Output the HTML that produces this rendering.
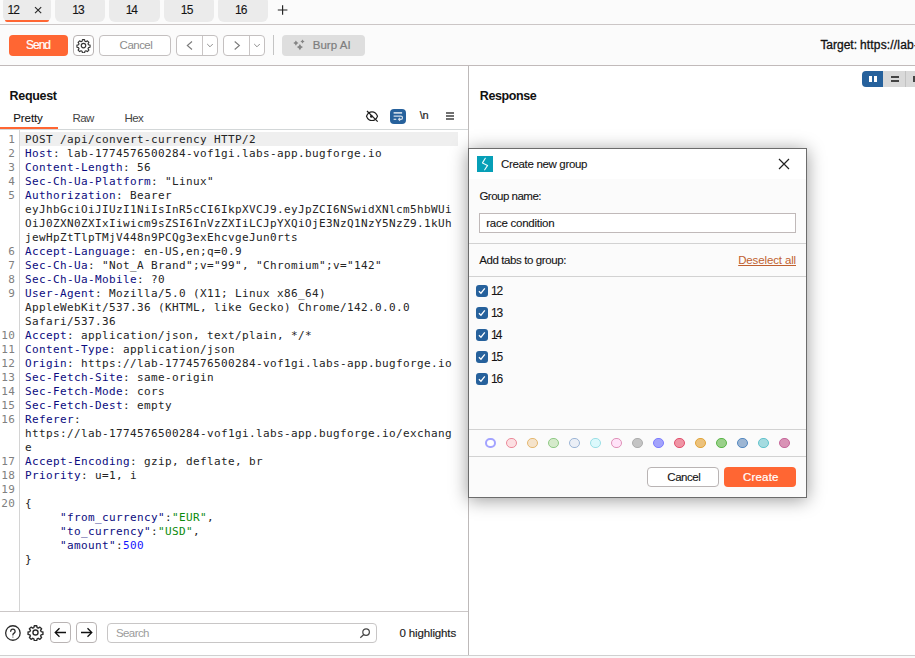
<!DOCTYPE html>
<html><head><meta charset="utf-8"><title>Burp Repeater</title>
<style>
*{box-sizing:border-box;margin:0;padding:0}
html,body{width:915px;height:658px;overflow:hidden;background:#fff}
body{position:relative;font-family:"Liberation Sans","DejaVu Sans",sans-serif;font-size:12px;color:#1a1a1a}
.abs{position:absolute}
.t{position:absolute;white-space:nowrap;line-height:16px}
/* top tabs */
#tabbar{left:0;top:0;width:915px;height:24px;background:#fbfbfb}
.tab{position:absolute;top:-4px;height:25.5px;background:#ebebeb;border-radius:6px}
#topline{left:0;top:24px;width:915px;height:1px;background:#cbc6c6}
#toolbar{left:0;top:25px;width:915px;height:40px;background:#fbfbfb}
#toolline{left:0;top:65px;width:915px;height:1px;background:#c1baba}
.btn{position:absolute;border:1px solid #b9b4b4;border-radius:4px;background:#fff}
/* editor */
#ed{left:0;top:133px;width:467px;font-family:"DejaVu Sans Mono","Liberation Mono",monospace;font-size:11px;letter-spacing:0.3774px;line-height:14px;color:#242424}
#ed div{height:14px;white-space:pre;position:relative}
#ed .n{position:absolute;left:0;width:15.300px;text-align:right;color:#808080}
#ed .c{position:absolute;left:25px}
#ed b{font-weight:normal;color:#0b0b80}
#ed i{font-style:normal;color:#0a8a0a}
#ed u{text-decoration:none;color:#1515ff}
</style></head><body>

<div id="tabbar" class="abs"></div>
<div class="tab" style="left:3px;width:48px"></div>
<div class="abs" style="left:5px;top:20px;width:44px;height:2px;background:#ff6633;border-radius:0 0 3px 3px"></div>
<div class="tab" style="left:55px;width:49.5px"></div>
<div class="tab" style="left:109px;width:50.5px"></div>
<div class="tab" style="left:164px;width:50px"></div>
<div class="tab" style="left:218px;width:50px"></div>
<span class="t" style="left:7.50px;top:2px;font-size:12px;font-weight:normal;color:#141414;letter-spacing:-0.800px;-webkit-text-stroke:0.1px #141414;">12</span>
<svg class="abs" style="left:33px;top:5px" width="10" height="10" viewBox="0 0 10 10"><path d="M2 2.2L8.2 8.2M8.2 2.2L2 8.2" stroke="#2a2a2a" stroke-width="1.150" fill="none"/></svg>
<span class="t" style="left:72.20px;top:2px;font-size:12px;font-weight:normal;color:#141414;letter-spacing:-0.800px;-webkit-text-stroke:0.1px #141414;">13</span>
<span class="t" style="left:125.70px;top:2px;font-size:12px;font-weight:normal;color:#141414;letter-spacing:-1.200px;-webkit-text-stroke:0.1px #141414;">14</span>
<span class="t" style="left:180.80px;top:2px;font-size:12px;font-weight:normal;color:#141414;letter-spacing:-0.800px;-webkit-text-stroke:0.1px #141414;">15</span>
<span class="t" style="left:235.00px;top:2px;font-size:12px;font-weight:normal;color:#141414;letter-spacing:-0.800px;-webkit-text-stroke:0.1px #141414;">16</span>
<svg class="abs" style="left:276px;top:3px" width="13" height="13" viewBox="0 0 13 13"><path d="M6.6 2.300V11.700M1.800 7H11.400" stroke="#222" stroke-width="1.150" fill="none"/></svg>
<div id="topline" class="abs"></div>

<div id="toolbar" class="abs"></div>
<div class="abs" style="left:9px;top:35px;width:59px;height:21px;background:#ff6633;border-radius:4px"></div>
<span class="t" style="left:26.00px;top:37px;font-size:12px;font-weight:normal;color:#fff;letter-spacing:-1.000px;-webkit-text-stroke:0.22px #fff;">Send</span>
<div class="btn" style="left:73px;top:35px;width:21px;height:21px"></div>
<svg class="abs" style="left:76px;top:37.600px" width="15" height="15.200" viewBox="0 0 24 24" fill="none" stroke="#333" stroke-width="1.8" stroke-linejoin="round"><path d="M10.3 2.5h3.4l.6 2.6 1.6.7 2.3-1.4 2.4 2.4-1.4 2.3.7 1.6 2.6.6v3.4l-2.6.6-.7 1.6 1.4 2.3-2.4 2.4-2.3-1.4-1.6.7-.6 2.6h-3.4l-.6-2.6-1.6-.7-2.3 1.4-2.4-2.4 1.4-2.3-.7-1.6-2.6-.6v-3.4l2.6-.6.7-1.6-1.4-2.3 2.4-2.4 2.3 1.4 1.6-.7z"/><circle cx="12" cy="12" r="3.6"/></svg>
<div class="btn" style="left:99px;top:35px;width:72px;height:21px;border-color:#c4c0c0"></div>
<span class="t" style="left:119.60px;top:37px;font-size:11.5px;font-weight:normal;color:#8c8c8c;letter-spacing:-0.520px;">Cancel</span>
<div class="btn" style="left:176px;top:35px;width:42px;height:21px;border-color:#c4c0c0"></div>
<div class="abs" style="left:202px;top:36px;width:1px;height:19px;background:#c9c5c5"></div>
<svg class="abs" style="left:185px;top:40px" width="8" height="11" viewBox="0 0 8 11"><path d="M7 1.500L2.300 5.500L7 9.500" stroke="#7a7a7a" stroke-width="1.100" fill="none"/></svg>
<svg class="abs" style="left:206px;top:42.700px" width="8" height="6" viewBox="0 0 8 6"><path d="M1.200 1L4 3.800L6.800 1" stroke="#909090" stroke-width="1" fill="none"/></svg>
<div class="btn" style="left:223px;top:35px;width:42px;height:21px;border-color:#c4c0c0"></div>
<div class="abs" style="left:249px;top:36px;width:1px;height:19px;background:#c9c5c5"></div>
<svg class="abs" style="left:232.500px;top:40px" width="8" height="11" viewBox="0 0 8 11"><path d="M1.700 1.500L6.400 5.500L1.700 9.500" stroke="#7a7a7a" stroke-width="1.100" fill="none"/></svg>
<svg class="abs" style="left:253px;top:42.700px" width="8" height="6" viewBox="0 0 8 6"><path d="M1.200 1L4 3.800L6.800 1" stroke="#909090" stroke-width="1" fill="none"/></svg>
<div class="abs" style="left:273px;top:35px;width:1px;height:20px;background:#c4c4c4"></div>
<div class="abs" style="left:282px;top:35px;width:83px;height:21px;background:#dedede;border-radius:4px"></div>
<svg class="abs" style="left:285px;top:33px" width="30" height="25" viewBox="285 33 30 25" fill="#858585"><path d="M295.9 40.5Q296.63 42.37 298.5 43.1Q296.63 43.83 295.9 45.7Q295.17 43.83 293.29999999999995 43.1Q295.17 42.37 295.9 40.5Z"/><path d="M302.5 39.4Q303.09 40.91 304.6 41.5Q303.09 42.09 302.5 43.6Q301.91 42.09 300.4 41.5Q301.91 40.91 302.5 39.4Z"/><path d="M299.9 44.0Q300.77 46.23 303.0 47.1Q300.77 47.97 299.9 50.2Q299.03 47.97 296.79999999999995 47.1Q299.03 46.23 299.9 44.0Z"/></svg>
<span class="t" style="left:312.70px;top:37px;font-size:11.5px;font-weight:normal;color:#7d7d7d;letter-spacing:0.033px;-webkit-text-stroke:0.2px #7d7d7d;">Burp AI</span>
<span class="t" style="left:820.40px;top:37px;font-size:12px;font-weight:normal;color:#111;letter-spacing:-0.017px;-webkit-text-stroke:0.3px #111;">Target:</span><span class="t" style="left:859.90px;top:37px;font-size:12px;font-weight:normal;color:#111;letter-spacing:0.180px;-webkit-text-stroke:0.3px #111;">https://lab-1774576500284-vof1gi.labs-app.bugforge.io</span>
<div id="toolline" class="abs"></div>

<!-- layout toggles -->
<div class="abs" style="left:862px;top:71px;width:21px;height:16px;background:#26619c;border-radius:4px 0 0 4px"></div>
<div class="abs" style="left:869px;top:76px;width:3px;height:6px;background:#fff"></div>
<div class="abs" style="left:874px;top:76px;width:3px;height:6px;background:#fff"></div>
<div class="abs" style="left:883px;top:71px;width:32px;height:16px;background:#d9d9d9"></div>
<div class="abs" style="left:905px;top:71px;width:1px;height:16px;background:#c2c2c2"></div>
<div class="abs" style="left:891px;top:76px;width:8px;height:2px;background:#444"></div>
<div class="abs" style="left:891px;top:80px;width:8px;height:2px;background:#444"></div>
<div class="abs" style="left:913px;top:76px;width:2px;height:6px;background:#444"></div>

<!-- request panel -->
<span class="t" style="left:9.60px;top:87.6px;font-size:12.5px;font-weight:bold;color:#111;letter-spacing:-0.317px;">Request</span>
<span class="t" style="left:13.30px;top:110px;font-size:11.5px;font-weight:normal;color:#141414;letter-spacing:-0.100px;-webkit-text-stroke:0.1px #141414;">Pretty</span>
<span class="t" style="left:72.40px;top:110px;font-size:11.5px;font-weight:normal;color:#444;letter-spacing:-0.500px;">Raw</span>
<span class="t" style="left:124.50px;top:110px;font-size:11.5px;font-weight:normal;color:#444;letter-spacing:-0.650px;">Hex</span>
<div class="abs" style="left:0;top:127px;width:58px;height:2px;background:#ff6633"></div>
<div class="abs" style="left:0;top:129px;width:468px;height:1px;background:#d3d7d8"></div>
<div class="abs" style="left:19px;top:130px;width:1px;height:481px;background:#d4d4d4"></div>
<div class="abs" style="left:20px;top:132px;width:438px;height:14px;background:#efefef"></div>


<!-- request header icons -->
<svg class="abs" style="left:364px;top:108px" width="16" height="16" viewBox="364 108 16 16" fill="none" stroke="#1e1e1e" stroke-width="1.150"><path d="M366.500 116.200C367.700 113 369.800 111.900 372 111.900S376.300 113 377.500 116.200C376.300 119.400 374.200 120.500 372 120.500S367.700 119.400 366.500 116.200Z"/><circle cx="371.300" cy="116.400" r="1.300" fill="#1e1e1e" stroke="none"/><path d="M367 111L377.700 121.700" stroke-width="1.200"/></svg>
<div class="abs" style="left:390px;top:109px;width:16px;height:15px;background:#26619c;border-radius:4px"></div>
<svg class="abs" style="left:390px;top:108.600px" width="16" height="15" viewBox="390 109 16 15" fill="none" stroke="#fff" stroke-width="1.300"><path d="M393.600 112.900H402.100"/><g opacity=".8"><path d="M393.600 116.100H400.900A1.600 1.600 0 0 1 400.900 119.300H399" stroke-width="1.150"/><path d="M400.100 117.800L398.500 119.300L400.100 120.800" stroke-width="1.100"/><path d="M393.600 119.300H396.300" stroke-width="1.200"/></g></svg>
<span class="t" style="left:419.800px;top:107px;font-size:11px;color:#222;letter-spacing:-0.3px;-webkit-text-stroke:0.2px #222">\n</span>
<div class="abs" style="left:446px;top:112.400px;width:8px;height:1.600px;background:#707070"></div>
<div class="abs" style="left:446px;top:115.300px;width:8px;height:1.600px;background:#707070"></div>
<div class="abs" style="left:446px;top:118.200px;width:8px;height:1.600px;background:#707070"></div>
<div id="ed" class="abs">
<div><span class="n">1</span><span class="c">POST /api/convert-currency HTTP/2</span></div>
<div><span class="n">2</span><span class="c"><b>Host</b>: lab-1774576500284-vof1gi.labs-app.bugforge.io</span></div>
<div><span class="n">3</span><span class="c"><b>Content-Length</b>: 56</span></div>
<div><span class="n">4</span><span class="c"><b>Sec-Ch-Ua-Platform</b>: "Linux"</span></div>
<div><span class="n">5</span><span class="c"><b>Authorization</b>: Bearer</span></div>
<div><span class="c">eyJhbGciOiJIUzI1NiIsInR5cCI6IkpXVCJ9.eyJpZCI6NSwidXNlcm5hbWUi</span></div>
<div><span class="c">OiJ0ZXN0ZXIxIiwicm9sZSI6InVzZXIiLCJpYXQiOjE3NzQ1NzY5NzZ9.1kUh</span></div>
<div><span class="c">jewHpZtTlpTMjV448n9PCQg3exEhcvgeJun0rts</span></div>
<div><span class="n">6</span><span class="c"><b>Accept-Language</b>: en-US,en;q=0.9</span></div>
<div><span class="n">7</span><span class="c"><b>Sec-Ch-Ua</b>: "Not_A Brand";v="99", "Chromium";v="142"</span></div>
<div><span class="n">8</span><span class="c"><b>Sec-Ch-Ua-Mobile</b>: ?0</span></div>
<div><span class="n">9</span><span class="c"><b>User-Agent</b>: Mozilla/5.0 (X11; Linux x86_64)</span></div>
<div><span class="c">AppleWebKit/537.36 (KHTML, like Gecko) Chrome/142.0.0.0</span></div>
<div><span class="c">Safari/537.36</span></div>
<div><span class="n">10</span><span class="c"><b>Accept</b>: application/json, text/plain, */*</span></div>
<div><span class="n">11</span><span class="c"><b>Content-Type</b>: application/json</span></div>
<div><span class="n">12</span><span class="c"><b>Origin</b>: https://lab-1774576500284-vof1gi.labs-app.bugforge.io</span></div>
<div><span class="n">13</span><span class="c"><b>Sec-Fetch-Site</b>: same-origin</span></div>
<div><span class="n">14</span><span class="c"><b>Sec-Fetch-Mode</b>: cors</span></div>
<div><span class="n">15</span><span class="c"><b>Sec-Fetch-Dest</b>: empty</span></div>
<div><span class="n">16</span><span class="c"><b>Referer</b>:</span></div>
<div><span class="c">https://lab-1774576500284-vof1gi.labs-app.bugforge.io/exchang</span></div>
<div><span class="c">e</span></div>
<div><span class="n">17</span><span class="c"><b>Accept-Encoding</b>: gzip, deflate, br</span></div>
<div><span class="n">18</span><span class="c"><b>Priority</b>: u=1, i</span></div>
<div><span class="n">19</span><span class="c"></span></div>
<div><span class="n">20</span><span class="c">{</span></div>
<div><span class="c">     <b>"from_currency"</b>:<i>"EUR"</i>,</span></div>
<div><span class="c">     <b>"to_currency"</b>:<i>"USD"</i>,</span></div>
<div><span class="c">     <b>"amount"</b>:<u>500</u></span></div>
<div><span class="c">}</span></div>
</div>


<!-- bottom bar of request -->
<div class="abs" style="left:0;top:611px;width:468px;height:1px;background:#cbc7c7"></div>
<svg class="abs" style="left:4px;top:624px" width="18" height="18" viewBox="-1 -1 18 18" fill="none" stroke="#2b2b2b" stroke-width="1.300"><circle cx="7.900" cy="8" r="7.250"/><path d="M5.700 6.300a2.200 2.200 0 1 1 3.400 1.850c-.8.500-1.200.9-1.200 1.750" stroke-linecap="round"/><circle cx="7.900" cy="12" r=".6" fill="#2b2b2b" stroke="none"/></svg>
<svg class="abs" style="left:27.400px;top:624px" width="17" height="17" viewBox="0 0 24 24" fill="none" stroke="#2b2b2b" stroke-width="1.950" stroke-linejoin="round"><path d="M10.300 2.500h3.400l.6 2.600 1.600.7 2.300-1.400 2.400 2.400-1.400 2.300.7 1.600 2.600.6v3.400l-2.600.6-.7 1.600 1.400 2.300-2.400 2.400-2.300-1.400-1.600.7-.6 2.600h-3.400l-.6-2.600-1.600-.7-2.300 1.400-2.400-2.400 1.400-2.300-.7-1.600-2.600-.6v-3.400l2.600-.6.7-1.600-1.400-2.300 2.400-2.400 2.300 1.400 1.600-.7z"/><circle cx="12" cy="12" r="3.600"/></svg>
<div class="btn" style="left:50px;top:622px;width:21px;height:21px"></div>
<svg class="abs" style="left:54px;top:627px" width="13" height="11" viewBox="0 0 13 11" fill="none" stroke="#111" stroke-width="1.300"><path d="M12 5.500H1.500M5.500 1.200L1.200 5.500L5.500 9.800"/></svg>
<div class="btn" style="left:76px;top:622px;width:21px;height:21px"></div>
<svg class="abs" style="left:80px;top:627px" width="13" height="11" viewBox="0 0 13 11" fill="none" stroke="#111" stroke-width="1.300"><path d="M1 5.500H11.500M7.500 1.200L11.800 5.500L7.500 9.800"/></svg>
<div class="btn" style="left:107px;top:623px;width:270px;height:20px;border-color:#c8c6c6"></div>
<span class="t" style="left:116.00px;top:624.5px;font-size:11.5px;font-weight:normal;color:#9c9c9c;letter-spacing:-0.600px;">Search</span>
<svg class="abs" style="left:359px;top:627px" width="13" height="13" viewBox="0 0 13 13" fill="none" stroke="#444" stroke-width="1.200"><circle cx="7.100" cy="5.100" r="3.300"/><path d="M4.800 7.500L1.300 10.700"/></svg>
<span class="t" style="left:399.40px;top:625px;font-size:11.5px;font-weight:normal;color:#1a1a1a;letter-spacing:-0.127px;-webkit-text-stroke:0.15px #1a1a1a;">0 highlights</span>
<div class="abs" style="left:0;top:655px;width:915px;height:1px;background:#d0d0d0"></div>
<div class="abs" style="left:0;top:656px;width:915px;height:2px;background:#fafafa"></div>

<!-- divider -->
<div class="abs" style="left:468px;top:66px;width:1px;height:589px;background:#bdb9b9"></div>

<!-- response panel -->
<span class="t" style="left:479.80px;top:87.6px;font-size:12.5px;font-weight:bold;color:#111;letter-spacing:-0.414px;">Response</span>

<!-- dialog -->
<div id="dlg" class="abs" style="left:468px;top:148px;width:339px;height:350px;background:#fbfbfb;border:1px solid #6c6c6c;box-shadow:0 2px 17px rgba(0,0,0,.4)"></div>
<div class="abs" style="left:469px;top:149px;width:337px;height:30px;background:#fff"></div>
<div class="abs" style="left:477px;top:156px;width:16px;height:16px;background:#069fb7"></div>
<svg class="abs" style="left:477px;top:156px" width="16" height="16" viewBox="0 0 16 16" fill="none" stroke="#eafafc" stroke-width="1.150" stroke-linejoin="round" stroke-linecap="round"><path d="M8.300 2.300L5.500 6.900L10.600 9.400L7.700 13.800"/></svg>
<span class="t" style="left:501.05px;top:156px;font-size:11.5px;font-weight:normal;color:#141414;letter-spacing:-0.337px;-webkit-text-stroke:0.1px #141414;">Create new group</span>
<svg class="abs" style="left:778px;top:158px" width="12" height="12" viewBox="0 0 12 12"><path d="M1 1L11 11M11 1L1 11" stroke="#222" stroke-width="1.200" fill="none"/></svg>
<span class="t" style="left:479.40px;top:188px;font-size:11.5px;font-weight:normal;color:#141414;letter-spacing:-0.500px;-webkit-text-stroke:0.1px #141414;">Group name:</span>
<div class="abs" style="left:479px;top:213px;width:317px;height:20px;background:#fff;border:1px solid #c0b9b9"></div>
<span class="t" style="left:486.30px;top:215px;font-size:11.5px;font-weight:normal;color:#141414;letter-spacing:-0.254px;-webkit-text-stroke:0.1px #141414;">race condition</span>
<div class="abs" style="left:469px;top:243px;width:337px;height:1px;background:#d2d2d2"></div>
<span class="t" style="left:479.20px;top:252px;font-size:11.5px;font-weight:normal;color:#141414;letter-spacing:-0.400px;-webkit-text-stroke:0.1px #141414;">Add tabs to group:</span>
<span class="t" style="left:738.20px;top:252px;font-size:11.5px;font-weight:normal;color:#c0602f;letter-spacing:-0.136px;text-decoration:underline;">Deselect all</span>
<div class="abs" style="left:469px;top:276px;width:337px;height:1px;background:#d2d2d2"></div>
<div class="abs" style="left:476px;top:285px;width:12px;height:12px;background:#26619c;border-radius:3px"></div><svg class="abs" style="left:476px;top:285px" width="12" height="12" viewBox="0 0 12 12"><path d="M2.900 6.300L4.950 8.250L8.800 3.300" stroke="#fff" stroke-width="1.250" fill="none"/></svg><span class="t" style="left:491.00px;top:283px;font-size:12px;font-weight:normal;color:#141414;letter-spacing:-1.200px;-webkit-text-stroke:0.1px #141414;">12</span>
<div class="abs" style="left:476px;top:307px;width:12px;height:12px;background:#26619c;border-radius:3px"></div><svg class="abs" style="left:476px;top:307px" width="12" height="12" viewBox="0 0 12 12"><path d="M2.900 6.300L4.950 8.250L8.800 3.300" stroke="#fff" stroke-width="1.250" fill="none"/></svg><span class="t" style="left:491.00px;top:305px;font-size:12px;font-weight:normal;color:#141414;letter-spacing:-1.200px;-webkit-text-stroke:0.1px #141414;">13</span>
<div class="abs" style="left:476px;top:329px;width:12px;height:12px;background:#26619c;border-radius:3px"></div><svg class="abs" style="left:476px;top:329px" width="12" height="12" viewBox="0 0 12 12"><path d="M2.900 6.300L4.950 8.250L8.800 3.300" stroke="#fff" stroke-width="1.250" fill="none"/></svg><span class="t" style="left:491.00px;top:327px;font-size:12px;font-weight:normal;color:#141414;letter-spacing:-1.800px;-webkit-text-stroke:0.1px #141414;">14</span>
<div class="abs" style="left:476px;top:351px;width:12px;height:12px;background:#26619c;border-radius:3px"></div><svg class="abs" style="left:476px;top:351px" width="12" height="12" viewBox="0 0 12 12"><path d="M2.900 6.300L4.950 8.250L8.800 3.300" stroke="#fff" stroke-width="1.250" fill="none"/></svg><span class="t" style="left:491.00px;top:349px;font-size:12px;font-weight:normal;color:#141414;letter-spacing:-1.200px;-webkit-text-stroke:0.1px #141414;">15</span>
<div class="abs" style="left:476px;top:373px;width:12px;height:12px;background:#26619c;border-radius:3px"></div><svg class="abs" style="left:476px;top:373px" width="12" height="12" viewBox="0 0 12 12"><path d="M2.900 6.300L4.950 8.250L8.800 3.300" stroke="#fff" stroke-width="1.250" fill="none"/></svg><span class="t" style="left:491.00px;top:371px;font-size:12px;font-weight:normal;color:#141414;letter-spacing:-1.200px;-webkit-text-stroke:0.1px #141414;">16</span>
<div class="abs" style="left:469px;top:429px;width:337px;height:1px;background:#d2d2d2"></div>

<div class="abs" style="left:485.20px;top:437.60px;width:10.6px;height:10.6px;border-radius:50%;background:#fff;border:2px solid #a3a3ff"></div><div class="abs" style="left:506.20px;top:437.60px;width:10.6px;height:10.6px;border-radius:50%;background:#fcdfe2;border:1.5px solid #ec8a9a"></div><div class="abs" style="left:527.20px;top:437.60px;width:10.6px;height:10.6px;border-radius:50%;background:#f5e3cb;border:1.5px solid #e5b870"></div><div class="abs" style="left:548.20px;top:437.60px;width:10.6px;height:10.6px;border-radius:50%;background:#d5eacb;border:1.5px solid #8fca85"></div><div class="abs" style="left:569.20px;top:437.60px;width:10.6px;height:10.6px;border-radius:50%;background:#ebeff6;border:1.5px solid #9cb5d6"></div><div class="abs" style="left:590.20px;top:437.60px;width:10.6px;height:10.6px;border-radius:50%;background:#dcf9fc;border:1.5px solid #9adfe6"></div><div class="abs" style="left:611.20px;top:437.60px;width:10.6px;height:10.6px;border-radius:50%;background:#ffe3f8;border:1.5px solid #e090b8"></div><div class="abs" style="left:632.20px;top:437.60px;width:10.6px;height:10.6px;border-radius:50%;background:#c4c4c4;border:1.5px solid #adadad"></div><div class="abs" style="left:653.20px;top:437.60px;width:10.6px;height:10.6px;border-radius:50%;background:#a3a3fb;border:1.5px solid #7c7cff"></div><div class="abs" style="left:674.20px;top:437.60px;width:10.6px;height:10.6px;border-radius:50%;background:#ef94a4;border:1.5px solid #e2506e"></div><div class="abs" style="left:695.20px;top:437.60px;width:10.6px;height:10.6px;border-radius:50%;background:#ecc27c;border:1.5px solid #e2a53a"></div><div class="abs" style="left:716.20px;top:437.60px;width:10.6px;height:10.6px;border-radius:50%;background:#9ad08a;border:1.5px solid #5bb749"></div><div class="abs" style="left:737.20px;top:437.60px;width:10.6px;height:10.6px;border-radius:50%;background:#9db6d3;border:1.5px solid #5488c0"></div><div class="abs" style="left:758.20px;top:437.60px;width:10.6px;height:10.6px;border-radius:50%;background:#a5dbe0;border:1.5px solid #62c3cc"></div><div class="abs" style="left:779.20px;top:437.60px;width:10.6px;height:10.6px;border-radius:50%;background:#d993b6;border:1.5px solid #c6679b"></div>
<div class="abs" style="left:469px;top:456px;width:337px;height:1px;background:#d2d2d2"></div>
<div class="btn" style="left:647px;top:467px;width:72px;height:20px"></div>
<span class="t" style="left:667.30px;top:469px;font-size:11.5px;font-weight:normal;color:#141414;letter-spacing:-0.460px;-webkit-text-stroke:0.1px #141414;">Cancel</span>
<div class="abs" style="left:724px;top:467px;width:72px;height:20px;background:#ff6633;border-radius:4px"></div>
<span class="t" style="left:743.10px;top:469px;font-size:11.5px;font-weight:normal;color:#fff;letter-spacing:0.160px;-webkit-text-stroke:0.2px #fff;">Create</span>

</body></html>
